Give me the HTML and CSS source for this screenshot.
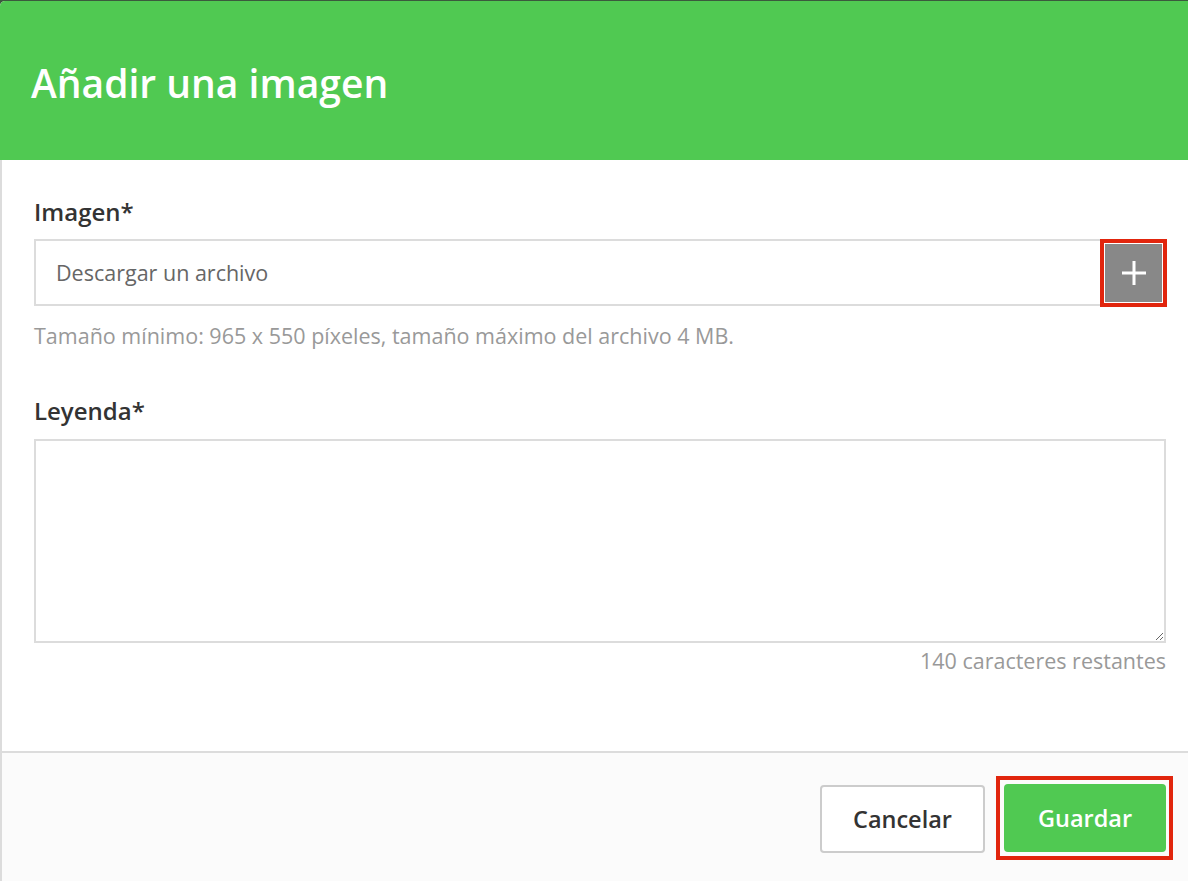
FILE: index.html
```html
<!DOCTYPE html>
<html lang="es">
<head>
<meta charset="utf-8">
<title>Añadir una imagen</title>
<link rel="stylesheet" href="styles.css">
</head>
<body>
<div class="modal">
  <header class="modal-header">
    <h1 class="modal-title">Añadir una imagen</h1>
  </header>
  <main class="modal-body">
    <div class="field">
      <label class="field-label">Imagen*</label>
      <div class="file-input">
        <span class="file-placeholder">Descargar un archivo</span>
        <span class="mark mark-add">
          <button class="file-add" type="button" aria-label="Añadir">
            <svg width="26" height="26" viewBox="0 0 26 26"><path d="M13 1v24M1 13h24" stroke="#fff" stroke-width="3" fill="none"/></svg>
          </button>
        </span>
      </div>
      <p class="help">Tamaño mínimo: 965 x 550 píxeles, tamaño máximo del archivo 4 MB.</p>
    </div>
    <div class="field field-caption">
      <label class="field-label label-caption">Leyenda*</label>
      <textarea class="caption-input"></textarea>
      <p class="counter">140 caracteres restantes</p>
    </div>
  </main>
  <footer class="modal-footer">
    <button class="btn btn-cancel" type="button">Cancelar</button>
    <span class="mark mark-save">
      <button class="btn btn-save" type="button">Guardar</button>
    </span>
  </footer>
</div>
</body>
</html>
```
FILE: styles.css
```css
* { box-sizing: border-box; }
html, body { margin: 0; padding: 0; }
body {
  background: #3b5a3d;
  font-family: "Open Sans", "Noto Sans", sans-serif;
  width: 1188px;
  height: 881px;
  overflow: hidden;
}
.modal {
  margin-top: 1px;
  height: 880px;
  background: #fff;
  border-top-left-radius: 5px;
  display: flex;
  flex-direction: column;
  overflow: hidden;
}
.modal-header {
  background: #50c952;
  height: 159px;
  display: flex;
  align-items: center;
  padding-left: 31px;
  padding-top: 5px;
  flex-shrink: 0;
}
.modal-title {
  margin: 0;
  color: #fff;
  font-size: 39px;
  font-weight: 600;
  line-height: 54px;
}
.modal-body {
  flex: 1;
  border-left: 2px solid #dcdcdc;
  padding: 36px 22px 0 32px;
}
.field-label {
  display: block;
  font-size: 24px;
  font-weight: 600;
  color: #333;
  line-height: 32px;
  margin-bottom: 11px;
}
.label-caption { margin-bottom: 12px; }
.file-input {
  height: 67px;
  border: 2px solid #dcdcdc;
  display: flex;
  align-items: center;
  justify-content: space-between;
  padding: 0 0 0 20px;
}
.file-placeholder {
  font-size: 21.5px;
  color: #666;
}
.mark {
  display: flex;
  border: 4px solid #e1250d;
}
.mark-add {
  padding: 1px;
  margin-right: -3px;
  margin-top: -6px;
  margin-bottom: -6px;
}
.file-add {
  width: 57px;
  height: 58px;
  background: #888;
  border: none;
  padding: 0;
  display: flex;
  align-items: center;
  justify-content: center;
}
.help {
  margin: 17px 0 0;
  font-size: 21.5px;
  color: #999;
  line-height: 26px;
}
.field-caption { margin-top: 46px; }
.caption-input {
  display: block;
  width: 100%;
  height: 204px;
  border: 2px solid #dcdcdc;
  resize: vertical;
  margin: 0;
  font-family: inherit;
}
.counter {
  margin: 5px 0 0;
  text-align: right;
  font-size: 21.5px;
  color: #999;
  line-height: 26px;
}
.modal-footer {
  height: 130px;
  flex-shrink: 0;
  border-top: 2px solid #dcdcdc;
  border-left: 2px solid #dcdcdc;
  background: #fbfbfb;
  display: flex;
  justify-content: flex-end;
  align-items: flex-start;
  gap: 11px;
  padding: 23px 15px 0 0;
}
.btn {
  height: 68px;
  font-family: inherit;
  font-size: 23.5px;
  font-weight: 600;
  border-radius: 4px;
  cursor: pointer;
}
.btn-cancel {
  width: 165px;
  margin-top: 9px;
  background: #fff;
  border: 2px solid #ccc;
  color: #333;
}
.mark-save {
  padding: 4px 3px 4px 4px;
}
.btn-save {
  width: 162px;
  background: #50c952;
  border: none;
  color: #fff;
}
```
